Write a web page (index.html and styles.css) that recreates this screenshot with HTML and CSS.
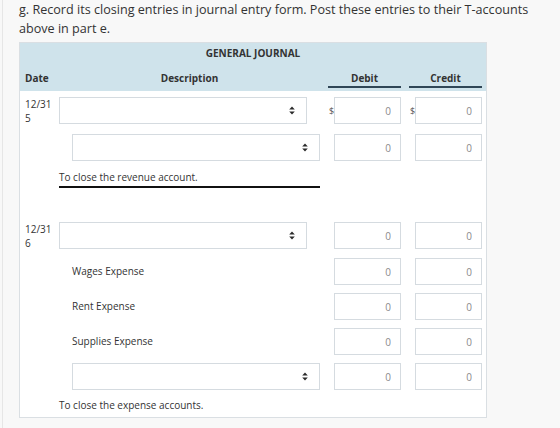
FILE: index.html
```html
<!DOCTYPE html>
<html lang="en">
<head>
    <meta charset="UTF-8">
    <title>General Journal</title>
    <link rel="stylesheet" href="styles.css">
</head>
<body>
    <div class="page">
        <p class="prompt">g. Record its closing entries in journal entry form. Post these entries to their T-accounts above in part e.</p>

        <div class="journal">
            <div class="journal-head">
                <div class="journal-title">GENERAL JOURNAL</div>
                <div class="line head-line">
                    <span class="head-date">Date</span>
                    <span class="head-desc">Description</span>
                    <span class="head-amt head-debit">Debit</span>
                    <span class="head-amt head-credit">Credit</span>
                </div>
            </div>

            <div class="journal-body">
                <!-- revenue closing entry -->
                <div class="entry">
                    <div class="line dated">
                        <div class="date">12/31<br>5</div>
                        <div class="desc">
                            <div class="pick">
                                <select></select>
                                <svg class="caret" width="6" height="9" viewBox="0 0 6 9"><path d="M3 0.5 L5.8 3.6 H0.2 Z M3 8.5 L5.8 5.4 H0.2 Z"/></svg>
                            </div>
                        </div>
                        <div class="amt debit"><span class="cur">$</span><input value="0"></div>
                        <div class="amt credit"><span class="cur">$</span><input value="0"></div>
                    </div>
                    <div class="line">
                        <div class="date"></div>
                        <div class="desc indent">
                            <div class="pick">
                                <select></select>
                                <svg class="caret" width="6" height="9" viewBox="0 0 6 9"><path d="M3 0.5 L5.8 3.6 H0.2 Z M3 8.5 L5.8 5.4 H0.2 Z"/></svg>
                            </div>
                        </div>
                        <div class="amt debit"><span class="cur"></span><input value="0"></div>
                        <div class="amt credit"><span class="cur"></span><input value="0"></div>
                    </div>
                    <div class="line">
                        <div class="date"></div>
                        <div class="memo ruled">To close the revenue account.</div>
                    </div>
                </div>

                <!-- expense closing entry -->
                <div class="entry">
                    <div class="line dated">
                        <div class="date">12/31<br>6</div>
                        <div class="desc">
                            <div class="pick">
                                <select></select>
                                <svg class="caret" width="6" height="9" viewBox="0 0 6 9"><path d="M3 0.5 L5.8 3.6 H0.2 Z M3 8.5 L5.8 5.4 H0.2 Z"/></svg>
                            </div>
                        </div>
                        <div class="amt debit"><span class="cur"></span><input value="0"></div>
                        <div class="amt credit"><span class="cur"></span><input value="0"></div>
                    </div>
                    <div class="line">
                        <div class="date"></div>
                        <div class="desc indent account">Wages Expense</div>
                        <div class="amt debit"><span class="cur"></span><input value="0"></div>
                        <div class="amt credit"><span class="cur"></span><input value="0"></div>
                    </div>
                    <div class="line">
                        <div class="date"></div>
                        <div class="desc indent account">Rent Expense</div>
                        <div class="amt debit"><span class="cur"></span><input value="0"></div>
                        <div class="amt credit"><span class="cur"></span><input value="0"></div>
                    </div>
                    <div class="line">
                        <div class="date"></div>
                        <div class="desc indent account">Supplies Expense</div>
                        <div class="amt debit"><span class="cur"></span><input value="0"></div>
                        <div class="amt credit"><span class="cur"></span><input value="0"></div>
                    </div>
                    <div class="line">
                        <div class="date"></div>
                        <div class="desc indent">
                            <div class="pick">
                                <select></select>
                                <svg class="caret" width="6" height="9" viewBox="0 0 6 9"><path d="M3 0.5 L5.8 3.6 H0.2 Z M3 8.5 L5.8 5.4 H0.2 Z"/></svg>
                            </div>
                        </div>
                        <div class="amt debit"><span class="cur"></span><input value="0"></div>
                        <div class="amt credit"><span class="cur"></span><input value="0"></div>
                    </div>
                    <div class="line">
                        <div class="date"></div>
                        <div class="memo">To close the expense accounts.</div>
                    </div>
                </div>
            </div>
        </div>
    </div>
</body>
</html>
```

FILE: styles.css
```css
:root {
    --color-text: #333333;
    --color-page: #f8f8f8;
    --color-head: #cfe3eb;
    --color-border: #dadfe3;
    --color-field: #d5dbe0;
    --color-value: #8a8a8a;
}

body {
    margin: 0;
    background-color: var(--color-page);
    font-family: 'Open Sans', 'Liberation Sans', sans-serif;
    color: var(--color-text);
}

.page {
    margin-left: 2px;
    min-height: 428px;
    padding: 0 0 0 16px;
    border-left: 1px solid #e6e6e6;
}

.prompt {
    margin: 0;
    width: 535px;
    font-size: 12.6px;
    line-height: 19px;
}

.journal {
    margin-top: 4px;
    width: 466px;
    background-color: #ffffff;
    border: 1px solid var(--color-border);
    font-size: 10px;
}

.journal-head {
    background-color: var(--color-head);
    padding: 2px 0 3px;
    font-weight: 700;
}

.journal-title {
    text-align: center;
    line-height: 16px;
}

.line {
    display: grid;
    grid-template-columns: 39px 261px 85px 81px;
    align-items: center;
}

.head-line {
    margin-top: 10px;
    align-items: end;
}

.head-line span {
    line-height: 14px;
    padding-bottom: 3px;
}

.head-date {
    padding-left: 5px;
}

.head-desc {
    text-align: center;
}

.head-amt {
    text-align: center;
}

.head-line .head-amt {
    padding-bottom: 1px;
    border-bottom: 2px solid #2f4656;
}

.head-debit {
    margin: 0 4px 0 8px;
}

.head-credit {
    margin: 0 4px 0 4px;
}

.journal-body {
    padding: 6px 0 5px;
}

.entry + .entry {
    margin-top: 34px;
}

.entry .line + .line {
    margin-top: 8px;
}

.entry:first-child .dated + .line {
    margin-top: 9px;
}

.dated {
    align-items: start;
}

.date {
    padding-left: 5px;
    line-height: 14px;
}

.desc.indent {
    padding-left: 13px;
}

.account {
    line-height: 27px;
}

.pick {
    position: relative;
    width: 248px;
    height: 27px;
}

.pick select {
    appearance: none;
    -webkit-appearance: none;
    box-sizing: border-box;
    width: 100%;
    height: 27px;
    margin: 0;
    background-color: #ffffff;
    border: 1px solid var(--color-field);
    border-radius: 0;
}

.caret {
    position: absolute;
    right: 12px;
    top: 9px;
    fill: #2b2b2b;
}

.amt {
    display: flex;
    align-items: center;
}

.debit {
    padding-left: 9px;
}

.credit {
    padding-left: 5px;
}

.cur {
    width: 5px;
    font-size: 9px;
    color: #555555;
}

.amt input {
    box-sizing: border-box;
    width: 67px;
    height: 27px;
    margin: 0;
    padding: 0 9px 0 4px;
    border: 1px solid var(--color-field);
    border-radius: 0;
    background-color: #ffffff;
    text-align: right;
    font-family: 'Open Sans', 'Liberation Sans', sans-serif;
    font-size: 10px;
    color: var(--color-value);
}

.memo {
    grid-column: 2;
    line-height: 14px;
}

.memo.ruled {
    padding: 1px 0 2px;
    border-bottom: 2px solid #111111;
}
```
